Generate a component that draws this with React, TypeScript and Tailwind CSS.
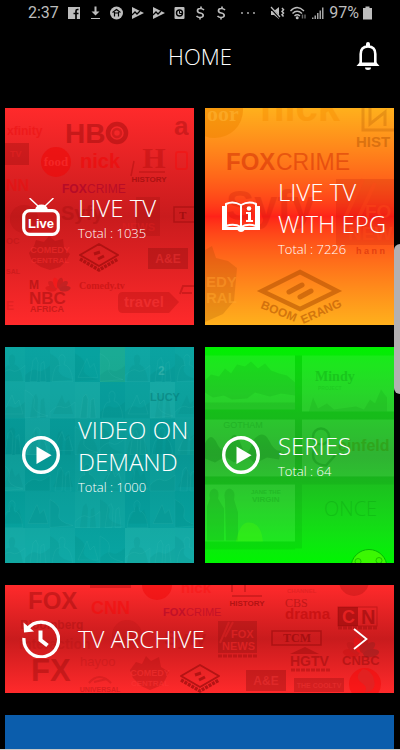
import React from "react";

type Word = {
  t: string;
  x: number;
  y: number;
  s: number;
  w?: number;
  c?: string;
  o?: number;
  f?: "sans" | "serif" | "light";
  a?: "start" | "middle" | "end";
};

const families = {
  sans: '"Liberation Sans", Arial, sans-serif',
  serif: '"Liberation Serif", serif',
  light: '"Open Sans", sans-serif',
};

function Words({ items, color }: { items: Word[]; color: string }) {
  return (
    <>
      {items.map((i) => (
        <text
          key={i.t + i.x + i.y}
          x={i.x}
          y={i.y}
          fontSize={i.s}
          fontWeight={i.w ?? 700}
          fontFamily={families[i.f ?? "sans"]}
          fill={i.c ?? color}
          opacity={i.o ?? 0.35}
          textAnchor={i.a ?? "start"}
        >
          {i.t}
        </text>
      ))}
    </>
  );
}

function Art({ w, h, children }: { w: number; h: number; children: React.ReactNode }) {
  return (
    <svg
      aria-hidden="true"
      className="absolute inset-0 h-full w-full"
      viewBox={`0 0 ${w} ${h}`}
      preserveAspectRatio="xMidYMid slice"
    >
      {children}
    </svg>
  );
}

function Boomerang({ x, y, k, color }: { x: number; y: number; k: number; color: string }) {
  return (
    <g transform={`translate(${x} ${y}) scale(${k})`} fill="none" stroke={color} strokeWidth="2" strokeLinejoin="round">
      <path d="M0 -13 L19 -2 L0 9 L-19 -2 Z" />
      <path d="M-19 2 L0 13 L19 2" strokeWidth="3.400" strokeDasharray="3 1" />
      <path d="M-5 -3 L1 -5 M-1 2 L5 -1" strokeWidth="3" />
    </g>
  );
}

function Peacock({ x, y, k }: { x: number; y: number; k: number }) {
  const feathers = ["#c81010", "#b81818", "#ff0d0d", "#a01818", "#8c2020", "#7c2020"];
  return (
    <g transform={`translate(${x} ${y}) scale(${k})`} opacity="0.4">
      {feathers.map((c, i) => (
        <ellipse key={c} cx="0" cy="-9" rx="3.4" ry="7" fill={c} transform={`rotate(${-80 + i * 32})`} />
      ))}
    </g>
  );
}

function LiveArt() {
  return (
    <Art w={189} h={217}>
      <rect x="0" y="35" width="24" height="22" fill="#8e0808" opacity="0.32" />
      <circle cx="51" cy="54" r="15" fill="#ee0808" opacity="0.6" />
      <rect x="131" y="89" width="24" height="39" fill="#8e0808" opacity="0.2" />
      <circle cx="19" cy="111" r="14" fill="#8e0808" opacity="0.14" />
      <path d="M31 132 l8 2 5-6 6 5 8-2 1 9 6 6-4 7-6 6-10 3-9-3-9-6-3-8 5-7z" fill="#8e0808" opacity="0.28" />
      <rect x="143" y="140" width="40" height="21" fill="#900e0e" opacity="0.4" />
      <path d="M118 184 H164 L174 194 L164 205 H118 Q113 205 113 200 V189 Q113 184 118 184Z" fill="#b00d0d" opacity="0.35" />
      <Words
        color="#8e0808"
        items={[
          { t: "xfinity", x: 2, y: 27, s: 12, c: "#e80808", o: 0.4 },
          { t: "HB", x: 60, y: 35, s: 28, o: 0.42 },
          { t: "a", x: 169, y: 27, s: 26, o: 0.35 },
          { t: "TV", x: 5, y: 49, s: 9, c: "#ff2a2a", o: 0.3 },
          { t: "food", x: 51, y: 58, s: 13, f: "serif", c: "#ff3a3a", o: 0.5, a: "middle" },
          { t: "nick", x: 75, y: 60, s: 20, c: "#ef0808", o: 0.6 },
          { t: "H", x: 149, y: 60, s: 30, f: "serif", a: "middle", c: "#b00a0a", o: 0.4 },
          { t: "HISTORY", x: 144, y: 74, s: 8, a: "middle", o: 0.6 },
          { t: "NN", x: 1, y: 83, s: 16, c: "#f00808", o: 0.4 },
          { t: "FOX", x: 57, y: 85, s: 12, c: "#a3002c", o: 0.6 },
          { t: "CRIME", x: 82, y: 85, s: 12, w: 400, c: "#a3002c", o: 0.55 },
          { t: "Syfy", x: 56, y: 112, s: 20, o: 0.25 },
          { t: "OC", x: 1, y: 136, s: 9, o: 0.2 },
          { t: "COMEDY", x: 45, y: 145, s: 9, a: "middle", c: "#ff3434", o: 0.45 },
          { t: "CENTRAL", x: 45, y: 155, s: 8, a: "middle", c: "#ff3434", o: 0.45 },
          { t: "SAL", x: 1, y: 166, s: 7, o: 0.25 },
          { t: "A&E", x: 163, y: 155, s: 12, a: "middle", c: "#f03636", o: 0.5 },
          { t: "M", x: 24, y: 181, s: 12, o: 0.45 },
          { t: "NBC", x: 24, y: 196, s: 17, o: 0.42 },
          { t: "AFRICA", x: 25, y: 204, s: 9, o: 0.4 },
          { t: "Comedy.tv", x: 74, y: 181, s: 10, f: "serif", c: "#b80d0d", o: 0.55 },
          { t: "E", x: 1, y: 202, s: 12, o: 0.15 },
          { t: "travel", x: 139, y: 199, s: 15, a: "middle", c: "#ff3c3c", o: 0.5 },
        ]}
      />
      <circle cx="112" cy="25" r="9" fill="none" stroke="#8e0808" strokeWidth="4.500" opacity="0.42" />
      <circle cx="112" cy="25" r="4" fill="none" stroke="#8e0808" strokeWidth="2.500" opacity="0.3" />
      <path d="M129 53 L126 68 M134 64 H160" stroke="#a00a0a" fill="none" strokeWidth="1.500" opacity="0.4" />
      <rect x="171" y="44" width="11" height="17" rx="2" stroke="#f00" fill="none" strokeWidth="2" opacity="0.3" />
      <rect x="169" y="99" width="30" height="15" stroke="#8e0808" strokeWidth="1.500" fill="none" opacity="0.45" />
      <Words
        color="#8e0808"
        items={[
          { t: "T", x: 174, y: 111, s: 11, f: "serif", o: 0.65 },
          { t: "NEWS", x: 117, y: 123, s: 11, c: "#e52222", o: 0.4 },
        ]}
      />
      <Boomerang x={94} y={149} k={1} color="#b01212" />
      <Peacock x={53} y={182} k={0.8} />
      <path d="M175 186 L178 178 H189 M177 185 H187" stroke="#a00c0c" fill="none" strokeWidth="2" opacity="0.4" />
    </Art>
  );
}

function EpgArt() {
  return (
    <Art w={189} h={217}>
      <circle cx="10" cy="2" r="28" fill="#f08400" opacity="0.5" />
      <path d="M131 71 H189 V137 H131 Z" fill="#a00000" opacity="0.15" />
      <path d="M0 142 L7 138 L11 150 L23 153 L32 160 L29 193 L18 206 L0 214 Z" fill="#914000" opacity="0.2" />
      <path d="M140 110 L158 71 M151 115 L170 75" stroke="#ff4b19" strokeWidth="4" opacity="0.3" />
      <Words
        color="#8a3500"
        items={[
          { t: "oor", x: 2, y: 13, s: 22, f: "serif", c: "#ffb83a", o: 0.5 },
          { t: "nick", x: 55, y: 13, s: 40, c: "#f78b00", o: 0.4 },
          { t: "HIST", x: 151, y: 39, s: 15, c: "#a64a00", o: 0.4 },
          { t: "FOX", x: 21, y: 62, s: 24, c: "#c71800", o: 0.42 },
          { t: "CRIME", x: 71, y: 62, s: 23, w: 400, c: "#c71800", o: 0.4 },
          { t: "Syfy", x: 21, y: 112, s: 42, c: "#a00000", o: 0.16 },
          { t: "EDY", x: 1, y: 179, s: 15, c: "#ff9a2a", o: 0.55 },
          { t: "RAL", x: 1, y: 195, s: 15, c: "#ffa52a", o: 0.55 },
          { t: "FO", x: 160, y: 110, s: 19, c: "#ff4a19", o: 0.4 },
          { t: "NEW", x: 143, y: 132, s: 19, c: "#ff4a19", o: 0.45 },
          { t: "h a n n", x: 151, y: 146, s: 9, c: "#b10000", o: 0.35 },
        ]}
      />
      <path d="M158 0 V22 H189 M165 0 V16 L180 4 V18" stroke="#a64a00" strokeWidth="3" fill="none" opacity="0.25" />
      <g fill="none" stroke="#a94800" opacity="0.5">
        <path d="M95 164 L132 183 L95 201 L57 183 Z" strokeWidth="4.500" />
        <path d="M84 184 L97 177 M95 189 L106 183" strokeWidth="5" strokeLinecap="round" />
      </g>
      <path id="boom-left" d="M55 200 L95 216" fill="none" />
      <path id="boom-right" d="M98 216 L140 197" fill="none" />
      <g fontFamily={families.sans} fontWeight="700" fontSize="12" fill="#a94800" opacity="0.5">
        <text><textPath href="#boom-left">BOOM</textPath></text>
        <text><textPath href="#boom-right">ERANG</textPath></text>
      </g>
    </Art>
  );
}

function PosterArt() {
  const shades = [
    0.1, 0.06, 0.12, 0.03, 0.22, 0.13, 0.06, 0.09,
    0.16, 0.2, 0.18, 0.22, 0.04, 0.09, 0.24, 0.1,
    0.02, 0.18, 0.04, 0.1, 0.1, 0.12, 0.04, 0.12,
    0.14, 0.03, 0.05, 0.1, 0.12, 0.04, 0.1, 0.06,
    0.03, 0.07, 0.09, 0.14, 0.12, 0.02, 0.07, 0.03,
    0.2, 0.18, 0.13, 0.05, 0.04, 0.24, 0.22, 0.2,
  ];
  const figures = [
    "M2 36 Q4 18 10 20 Q7 10 12 9 Q17 10 14 19 Q21 20 23 36Z",
    "M0 30 Q8 22 12 25 T25 20 V36 H0Z",
    "M3 32 L12 13 L15 22 L19 18 L23 32Z",
    "M5 36 L8 15 L11 12 L13 17 L12 36Z M15 36 L16 18 L19 16 L21 36Z",
    "M0 8 Q12 14 9 22 T23 34 L0 36Z",
  ];
  return (
    <Art w={189} h={217}>
      {shades.map((o, i) => (
        <g key={i} transform={`translate(${(i % 8) * 25 - 5} ${Math.floor(i / 8) * 36.5 - 1})`}>
          <rect width="25" height="36.5" fill={i === 4 ? "#63d070" : "#4fd3c6"} opacity={o} />
          <path d={figures[(i * i + Math.floor(i / 8) * 2) % 5]} fill="#00736f" opacity="0.1" />
          <path d={figures[(i * 2 + 1) % 5]} fill="none" stroke="#57d2c8" opacity="0.1" />
        </g>
      ))}
      <Words
        color="#00706d"
        items={[
          { t: "LUCY", x: 145, y: 54, s: 11, o: 0.45 },
          { t: "2", x: 153, y: 28, s: 12, c: "#78d3c7", o: 0.3 },
        ]}
      />
    </Art>
  );
}

function SeriesArt() {
  return (
    <Art w={189} h={217}>
      <g fill="#fff" opacity="0.07">
        <rect x="0" y="9" width="90" height="54" />
        <rect x="97" y="9" width="92" height="56" />
        <rect x="0" y="73" width="90" height="57" />
        <rect x="97" y="73" width="92" height="57" />
        <rect x="0" y="138" width="90" height="57" />
      </g>
      <g fill="#007d08" opacity="0.12">
        <rect x="90" y="9" width="7" height="193" />
        <rect x="0" y="56" width="90" height="17" />
        <rect x="97" y="65" width="92" height="8" />
        <rect x="0" y="130" width="189" height="8" />
        <rect x="0" y="195" width="90" height="8" />
      </g>
      <path d="M0 34 L6 28 14 30 20 22 26 27 32 18 40 20 46 15 53 22 60 17 66 24 74 27 82 29 90 36 V49 L76 47 65 50 50 46 42 52 27 53 19 49 8 51 0 46Z" fill="#007d08" opacity="0.12" />
      <path d="M104 65 l4 -14 5 11 9 -5 7 6 22 -3 8 3 6 -10 5 4 6 -14 6 8 V65 Z" fill="#007d08" opacity="0.12" />
      <path d="M0 97 Q6 84 12 97 T24 95 T36 98 T48 94 Q58 82 64 94 T76 104 L74 113 62 111 50 117 41 109 29 116 20 110 10 116 0 112Z" fill="#006d08" opacity="0.22" />
      <path d="M5 152 Q3 144 9 142 Q15 143 13 152 L19 162 V194 H2 V160Z M20 153 Q18 144 24 142 Q31 143 29 153 L33 166 V194 H21Z" fill="#00750a" opacity="0.16" />
      <g fill="none" stroke="#00750a" strokeWidth="2.500" opacity="0.28">
        <circle cx="116" cy="90" r="8" />
        <path d="M110 99 Q103 118 121 119 L130 109" />
      </g>
      <Words
        color="#007a08"
        items={[
          { t: "Mindy", x: 110, y: 34, s: 14, f: "serif", o: 0.24 },
          { t: "PROJECT", x: 113, y: 43, s: 5, o: 0.12 },
          { t: "GOTHAM", x: 38, y: 81, s: 9, w: 400, a: "middle", o: 0.22 },
          { t: "einfeld", x: 133, y: 104, s: 16, c: "#338800", o: 0.4 },
          { t: "JANE THE", x: 46, y: 147, s: 6, o: 0.2 },
          { t: "VIRGIN", x: 47, y: 155, s: 8, o: 0.2 },
          { t: "ONCE", x: 119, y: 169, s: 20, w: 300, f: "light", o: 0.2 },
        ]}
      />
      <path d="M31 195 Q35 175 44 176 Q56 176 58 195Z" fill="#57ff00" opacity="0.25" />
      <circle cx="164" cy="221" r="18" fill="#69ff00" opacity="0.55" stroke="#008c00" />
      <circle cx="153" cy="215" r="3" fill="none" stroke="#008c00" opacity="0.5" />
      <circle cx="174" cy="214" r="3" fill="none" stroke="#008c00" opacity="0.5" />
    </Art>
  );
}

function ArchiveArt() {
  return (
    <Art w={389} h={108}>
      <rect x="85" y="0" width="41" height="3" fill="#8e0808" opacity="0.3" />
      <circle cx="152" cy="0" r="15" fill="#ee0808" opacity="0.5" />
      <circle cx="122" cy="50" r="15" fill="#8e0808" opacity="0.12" />
      <path d="M84 98 Q94 86 106 98 M89 97 L102 94" stroke="#8e0808" fill="none" strokeWidth="2" opacity="0.2" />
      <path d="M131 77 l6 2 4-8 5 5 8-4 2 10 8 5-4 8-3 5-12 5-9-4-8-8-3-8z" fill="#8e0808" opacity="0.25" />
      <rect x="213" y="36" width="39" height="32" fill="#900e0e" opacity="0.35" />
      <rect x="333" y="22" width="20" height="19" fill="#8e0808" opacity="0.55" />
      <rect x="241" y="85" width="40" height="21" fill="#900e0e" opacity="0.4" />
      <rect x="289" y="93" width="50" height="14" fill="#900e0e" opacity="0.35" />
      <circle cx="349" cy="-4" r="15" fill="#8e0808" opacity="0.25" />
      <path d="M285 69 L300 62 L314 69Z" fill="#8e0808" opacity="0.4" />
      <Words
        color="#8e0808"
        items={[
          { t: "FOX", x: 23, y: 24, s: 24, o: 0.4 },
          { t: "CNN", x: 86, y: 29, s: 18, c: "#f50909", o: 0.5 },
          { t: "nick", x: 176, y: 8, s: 15, c: "#f60808", o: 0.3 },
          { t: "Bloomberg", x: 15, y: 44, s: 12, o: 0.3 },
          { t: "interaction", x: 14, y: 64, s: 14, o: 0.15 },
          { t: "FX", x: 26, y: 96, s: 31, o: 0.38 },
          { t: "hayoo", x: 75, y: 81, s: 13, o: 0.18, w: 400 },
          { t: "UNIVERSAL", x: 95, y: 107, s: 7, a: "middle", o: 0.3 },
          { t: "FOX", x: 158, y: 31, s: 11, c: "#a3002c", o: 0.5 },
          { t: "CRIME", x: 181, y: 31, s: 11, w: 400, c: "#a3002c", o: 0.45 },
          { t: "Syfy", x: 159, y: 60, s: 20, o: 0.2 },
          { t: "HISTORY", x: 242, y: 21, s: 8, a: "middle", o: 0.6 },
          { t: "CHANNEL", x: 282, y: 8, s: 6, o: 0.18 },
          { t: "CBS", x: 280, y: 22, s: 12, w: 400, f: "serif", o: 0.45 },
          { t: "drama", x: 280, y: 34, s: 15, c: "#b90808", o: 0.55 },
          { t: "HGTV", x: 285, y: 81, s: 14, o: 0.45 },
          { t: "CNBC", x: 337, y: 80, s: 13, o: 0.45 },
          { t: "COMEDY", x: 145, y: 91, s: 9, a: "middle", c: "#ff3838", o: 0.45 },
          { t: "CENTRAL", x: 145, y: 101, s: 8, a: "middle", c: "#ff3838", o: 0.45 },
          { t: "FOX", x: 226, y: 53, s: 11, c: "#ed2929", o: 0.6 },
          { t: "NEWS", x: 217, y: 65, s: 11, c: "#ed2929", o: 0.65 },
          { t: "TCM", x: 292, y: 57, s: 12, f: "serif", a: "middle", o: 0.6 },
          { t: "C", x: 337, y: 38, s: 18, c: "#f02525", o: 0.8 },
          { t: "N", x: 356, y: 39, s: 20, o: 0.55 },
          { t: "A&E", x: 261, y: 100, s: 12, a: "middle", c: "#e93030", o: 0.65 },
          { t: "THE COOLTV", x: 314, y: 103, s: 7, a: "middle", c: "#e93030", o: 0.7 },
        ]}
      />
      <path d="M227 0 V7 M240 0 V7 M227 11 H257" stroke="#8e0808" strokeWidth="2" opacity="0.3" />
      <path d="M213 71 H252 M286 85 H325 M333 43 H372" stroke="#8e0808" strokeWidth="3" strokeDasharray="4 1" opacity="0.35" />
      <path d="M215 58 L224 37 M220 52 L228 37" stroke="#ed2929" strokeWidth="2" opacity="0.4" />
      <rect x="267" y="46" width="49" height="14" stroke="#8e0808" strokeWidth="1.500" fill="none" opacity="0.5" />
      <rect x="333" y="22" width="39" height="19" stroke="#8e0808" fill="none" opacity="0.4" />
      <Boomerang x={195} y={93} k={1} color="#b41414" />
      <Peacock x={356} y={70} k={1.15} />
      <circle cx="360" cy="99" r="16" fill="#f50505" opacity="0.5" />
      <path d="M358 84 q-10 8 -1 14 q7 5 2 10 q13 -2 10 -13 q-2 -10 -11 -11" fill="#dc2727" opacity="0.7" />
    </Art>
  );
}

function LiveIcon() {
  return (
    <svg aria-hidden="true" className="relative h-[38px] w-[38px] shrink-0" viewBox="0 0 38 38" fill="none" stroke="#fff">
      <path d="M8 0.500 L16 8 M31 0.500 L23 8" strokeWidth="1.500" strokeLinecap="round" />
      <path d="M13 12 Q14 6.500 19.500 6.500 T26 12Z" fill="#fff" stroke="none" />
      <rect x="1.700" y="12.700" width="34.600" height="23.600" rx="6" strokeWidth="3.200" />
      <text x="19" y="29.500" textAnchor="middle" fill="#fff" stroke="none" fontSize="13" fontWeight="700" fontFamily={families.sans}>Live</text>
    </svg>
  );
}

function BookIcon() {
  return (
    <svg aria-hidden="true" className="relative h-[38px] w-[38px] shrink-0" viewBox="0 0 38 38">
      <path d="M0 8 H4 V29 H34 V8 H38 V32 H22.500 Q21.500 34 19 34 T15.500 32 H0Z" fill="#fff" />
      <path d="M19 7 Q11 2.500 4 6 V28 Q12 25 19 29 Q26 25 34 28 V6 Q27 2.500 19 7 V29" fill="none" stroke="#fff" strokeWidth="2" />
      <circle cx="27" cy="10.500" r="2.300" fill="#fff" />
      <path d="M24 14 H29 V22 H31 V24 H24 V22 H26 V16 H24Z" fill="#fff" />
    </svg>
  );
}

function PlayIcon() {
  return (
    <svg aria-hidden="true" className="relative h-[38px] w-[38px] shrink-0" viewBox="0 0 38 38">
      <circle cx="19" cy="19" r="17.300" fill="none" stroke="#fff" strokeWidth="3.400" />
      <path d="M14.500 10.500 V28 L29.500 19.200Z" fill="#fff" />
    </svg>
  );
}

function HistoryIcon() {
  return (
    <svg aria-hidden="true" className="relative h-[38px] w-[38px] shrink-0" viewBox="0 0 38 38" fill="none" stroke="#fff">
      <path d="M5.500 9 A17.300 17.300 0 1 1 2 18" strokeWidth="3.300" />
      <path d="M1.500 2.500 L2 12.500 L12 11.500Z" fill="#fff" stroke="none" />
      <path d="M18.500 10.500 V20 L25.500 25.500" strokeWidth="4" />
    </svg>
  );
}

type TileProps = {
  title: string;
  total?: string;
  icon: React.ReactNode;
  art: React.ReactNode;
  className: string;
  arrow?: boolean;
};

function Tile({ title, total, icon, art, className, arrow }: TileProps) {
  return (
    <button type="button" className={`relative flex items-center gap-[18px] overflow-hidden pl-[17px] text-left text-white ${className}`}>
      {art}
      {icon}
      <span className="relative min-w-0 flex-1">
        <span className="block text-2xl leading-8 font-light">{title}</span>
        {total && <span className="block text-[13px] leading-[18px] font-light">Total : {total}</span>}
      </span>
      {arrow && (
        <svg aria-hidden="true" className="relative mr-[26px] h-6 w-4 shrink-0" viewBox="0 0 16 24" fill="none" stroke="#fff" strokeWidth="1.800">
          <path d="M2 2 L14.500 12 L2 22" />
        </svg>
      )}
    </button>
  );
}

function Glyph({ children }: { children: React.ReactNode }) {
  return (
    <svg aria-hidden="true" className="h-4 w-[21px]" viewBox="0 0 21 16" fill="#bdbdbd">
      {children}
    </svg>
  );
}

function PlayConsole() {
  return (
    <Glyph>
      <path d="M5 2 L17 8 L5 14Z" />
      <path d="M5 10 L8 7 L10 9 L13 6" fill="none" stroke="#000" strokeWidth="1.300" />
    </Glyph>
  );
}

function Dollar() {
  return (
    <Glyph>
      <path d="M14 5 Q12.500 3.500 10.500 3.500 Q7.500 3.500 7.500 5.700 Q7.500 7.500 10.300 8 Q13.200 8.500 13.200 10.500 Q13 12.500 10 12.500 Q8 12.500 6.500 11 M11 1.500 V4 M10 12 V14.500" fill="none" stroke="#bdbdbd" strokeWidth="1.700" />
    </Glyph>
  );
}

function StatusBar() {
  return (
    <div className="flex h-[26px] items-center px-7 font-[Roboto,sans-serif] text-base text-[#bdbdbd]">
      <span className="w-9">2:37</span>
      <Glyph>
        <rect x="4" y="2" width="12" height="12" />
        <path d="M14.500 4.500 H13.500 Q12 4.500 12 6 V14 M9.500 8.500 H14.500" fill="none" stroke="#000" strokeWidth="1.700" />
      </Glyph>
      <Glyph>
        <path d="M9.500 1.500 H11.500 V6.500 H14.500 L10.500 10.500 L6.500 6.500 H9.500Z M6 13 H15 V14 H6Z" />
      </Glyph>
      <Glyph>
        <circle cx="10.500" cy="8" r="6.500" />
        <path d="M6.500 7.500 L10.500 4.500 L14.500 7.500 M8.500 7 V11.500 M12.500 11.500 V7 M8.500 8 H12.500" fill="none" stroke="#000" strokeWidth="1.200" />
      </Glyph>
      <PlayConsole />
      <PlayConsole />
      <Glyph>
        <rect x="5.500" y="2" width="10" height="12" rx="1" />
        <circle cx="10.500" cy="8" r="3" fill="none" stroke="#000" strokeWidth="1.400" />
        <path d="M10.500 6 V8.500 H13" fill="none" stroke="#000" />
      </Glyph>
      <Dollar />
      <Dollar />
      <svg aria-hidden="true" className="ml-[7px] h-4 w-[18px]" viewBox="0 0 18 16" fill="#bdbdbd">
        <circle cx="3" cy="8" r="0.900" />
        <circle cx="9" cy="8" r="0.900" />
        <circle cx="15" cy="8" r="0.900" />
      </svg>
      <span className="ml-auto flex items-center">
        <svg aria-hidden="true" className="h-4 w-5" viewBox="0 0 20 16" fill="#bdbdbd">
          <path d="M3 6 H6 L11 2 V14 L6 10 H3Z" />
          <path d="M2 2 L12 13" stroke="#000" strokeWidth="2.200" />
          <path d="M3 2 L12 12" stroke="#bdbdbd" strokeWidth="1.200" />
          <path d="M14 3 l1.500 1.700 -1.500 1.700 1.500 1.700 -1.500 1.700 1.500 1.700" fill="none" stroke="#bdbdbd" strokeWidth="1.500" />
        </svg>
        <svg aria-hidden="true" className="h-4 w-5" viewBox="0 0 20 16" fill="none" stroke="#bdbdbd" strokeWidth="1.400">
          <path d="M2.500 6 Q9 -1 16 6 M4.500 8.500 Q9 4 14 8.500 M6.500 11 Q9 8.500 12 11" />
          <circle cx="9.200" cy="12.700" r="0.800" fill="#bdbdbd" />
          <path d="M14.500 9.500 V13.500 M17 9.500 V13.500" stroke="#666" />
        </svg>
        <svg aria-hidden="true" className="mr-px h-4 w-5" viewBox="0 0 20 16" fill="#a5a5a5">
          <path d="M4 12.500 H5.500 V14 H4Z M6.500 10.500 H8 V14 H6.500Z M9 8 H10.500 V14 H9Z M11.500 5.500 H13 V14 H11.500Z M14 2.500 H15.500 V14 H14Z" />
        </svg>
        <span>97%</span>
        <svg aria-hidden="true" className="ml-1 h-4 w-[9px]" viewBox="0 0 9 16" fill="#bdbdbd">
          <path d="M2.500 1.500 H6.500 V3 H9 V14.500 H0 V3 H2.500Z" />
        </svg>
      </span>
    </div>
  );
}

export default function App() {
  return (
    <div className="relative flex min-h-screen flex-col border-b border-[#c8c8c8] bg-black font-['Open_Sans',sans-serif] text-white">
      <StatusBar />
      <header className="grid h-[60px] grid-cols-[1fr_auto_1fr] items-center">
        <h1 className="col-start-2 text-[22px] leading-8 font-light">HOME</h1>
        <button type="button" aria-label="Notifications" className="mr-5 justify-self-end">
          <svg aria-hidden="true" className="h-[30px] w-6" viewBox="0 0 24 30" fill="none" stroke="#fff">
            <path d="M0.500 25 L4 21 H20 L23.500 25Z" fill="#fff" stroke="none" />
            <path d="M4.700 22 V13 Q4.700 5.500 12 5.500 T19.300 13 V22" fill="#000" strokeWidth="2.600" />
            <path d="M4 22.700 H20" strokeWidth="2.400" />
            <path d="M10 5 V3 Q10 1 12 1 T14 3 V5Z M9 26.500 H15 Q15 29 12 29 T9 26.500Z" fill="#fff" stroke="none" />
          </svg>
        </button>
      </header>
      <main className="mt-[22px] flex flex-1 flex-col gap-[22px] pr-[6px] pl-[5px]">
        <div className="grid grid-cols-2 gap-x-[11px] gap-y-[22px]">
          <Tile
            title="LIVE TV"
            total="1035"
            icon={<LiveIcon />}
            art={<LiveArt />}
            className="h-[217px] bg-linear-to-b from-[#ff2a2b] via-[#c91b1d] to-[#ff2a2b]"
          />
          <Tile
            title="LIVE TV WITH EPG"
            total="7226"
            icon={<BookIcon />}
            art={<EpgArt />}
            className="h-[217px] bg-linear-to-b from-[#ffb01c] via-[#ff2218] to-[#ffb01c]"
          />
          <Tile
            title="VIDEO ON DEMAND"
            total="1000"
            icon={<PlayIcon />}
            art={<PosterArt />}
            className="h-[216px] bg-linear-to-b from-[#06a19f] via-[#049391] to-[#06a4a1]"
          />
          <Tile
            title="SERIES"
            total="64"
            icon={<PlayIcon />}
            art={<SeriesArt />}
            className="h-[216px] bg-linear-to-b from-[#00f000] via-[#1fad22] to-[#00f500]"
          />
        </div>
        <Tile
          title="TV ARCHIVE"
          icon={<HistoryIcon />}
          art={<ArchiveArt />}
          arrow
          className="h-[108px] w-full bg-linear-to-b from-[#ff2a2b] via-[#c91b1d] to-[#ff2a2b]"
        />
        <div className="min-h-[34px] flex-1 bg-[#0b5dac]" />
      </main>
      <div className="absolute top-[244px] right-0 h-[150px] w-[6px] rounded-l-md bg-[#b3b0b1]" />
    </div>
  );
}
